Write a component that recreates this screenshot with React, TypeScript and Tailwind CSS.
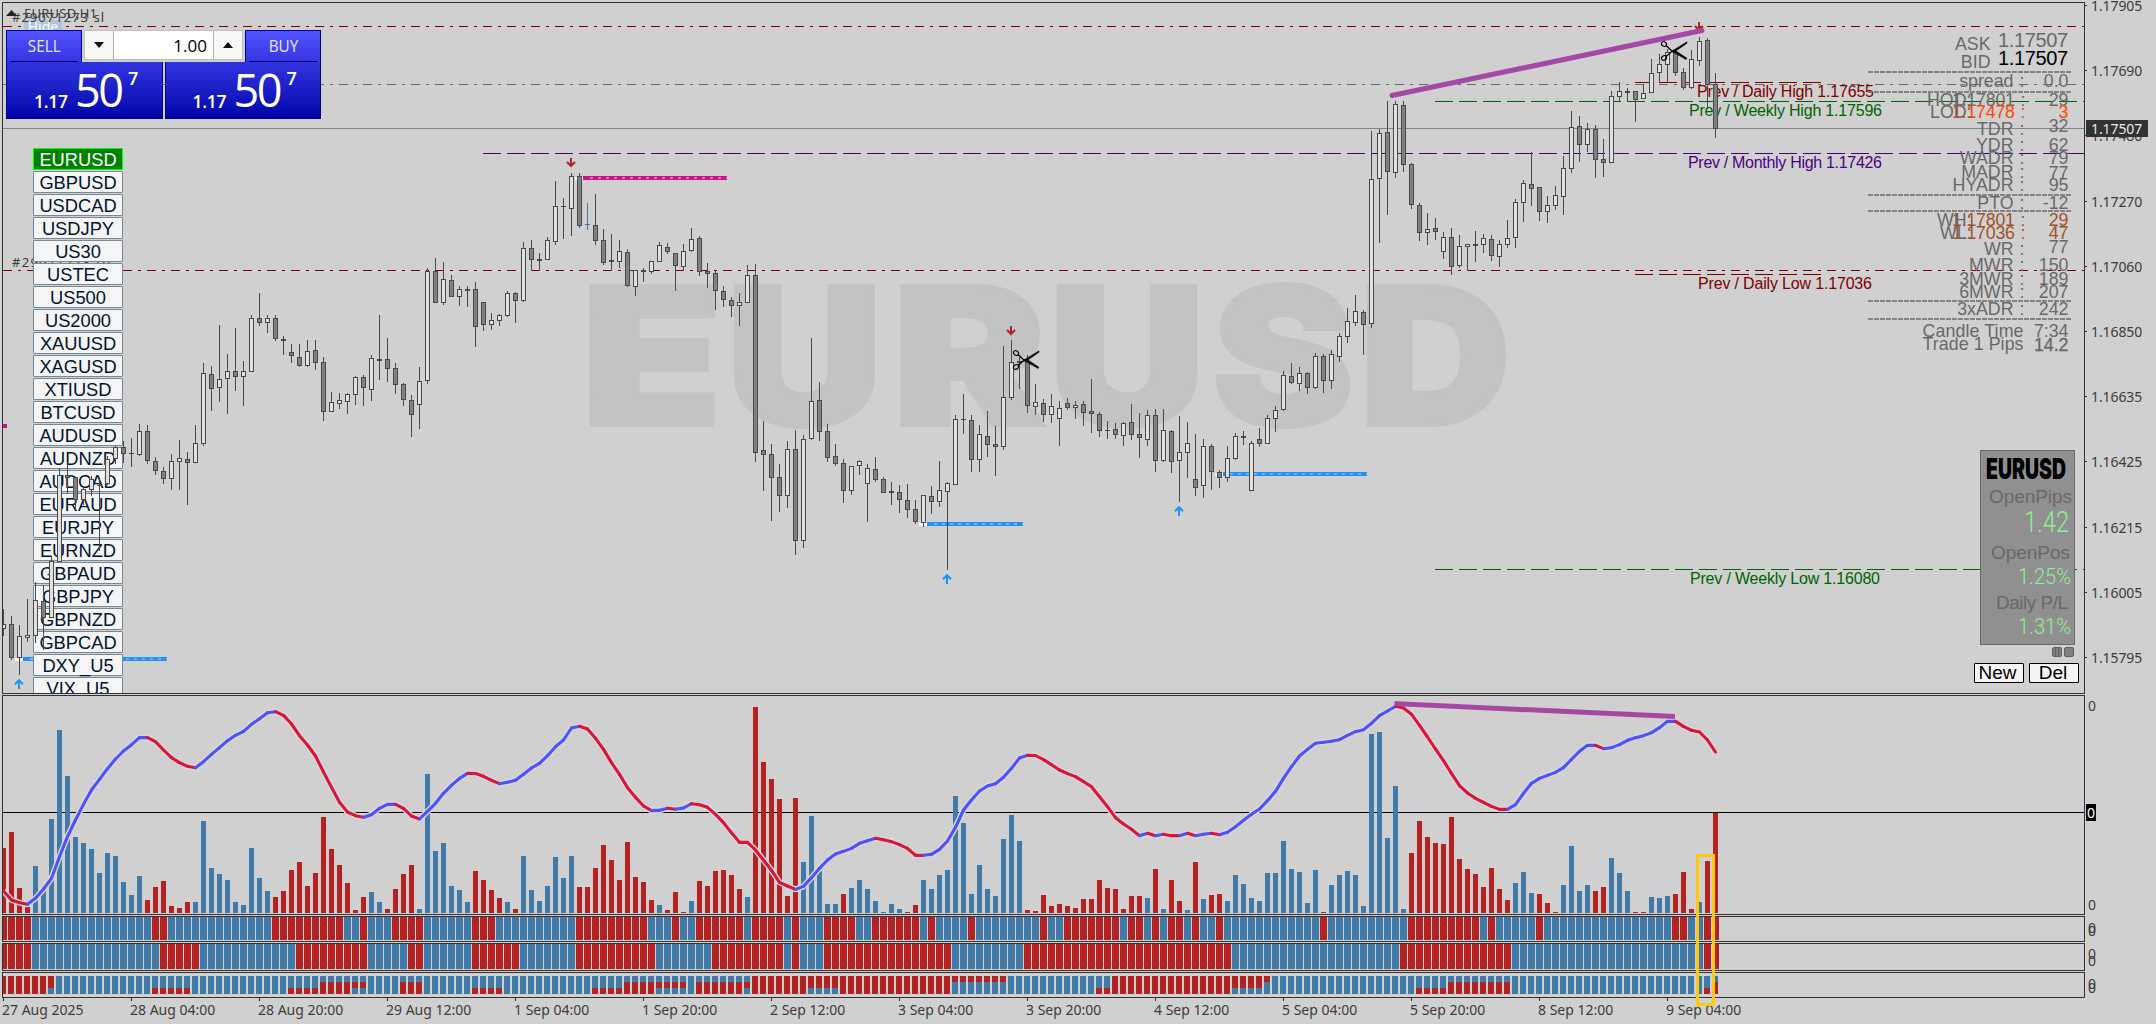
import { Fragment } from 'react';

type Candle = [number, number, number, number, string];

// high, body top, body bottom, low, kind (w = up, f = down, d = doji, b = marked doji)
const candles: Candle[] = [
    [609, 624, 629, 636, 'w'], [616, 624, 658, 660, 'f'], [625, 636, 658, 675, 'w'], [599, 635, 638, 642, 'w'], [582, 600, 636, 643, 'w'],
    [585, 601, 618, 650, 'f'], [556, 561, 618, 618, 'w'], [468, 475, 562, 562, 'w'], [462, 475, 478, 494, 'f'], [477, 477, 500, 510, 'f'],
    [486, 489, 500, 505, 'w'], [476, 479, 490, 496, 'w'], [478, 485, 486, 551, 'd'], [456, 459, 484, 485, 'w'], [446, 447, 459, 464, 'w'],
    [441, 447, 454, 463, 'f'], [438, 453, 454, 467, 'd'], [424, 431, 455, 456, 'w'], [425, 431, 461, 464, 'f'], [457, 461, 471, 475, 'f'],
    [467, 471, 479, 484, 'f'], [454, 461, 479, 490, 'w'], [440, 458, 462, 490, 'w'], [452, 459, 463, 505, 'f'], [425, 443, 463, 463, 'w'],
    [363, 373, 444, 446, 'w'], [366, 374, 389, 411, 'f'], [325, 379, 388, 402, 'w'], [354, 371, 379, 414, 'w'], [328, 371, 377, 391, 'f'],
    [361, 371, 377, 406, 'w'], [315, 318, 372, 372, 'w'], [293, 318, 323, 326, 'f'], [315, 318, 323, 333, 'w'], [315, 318, 339, 341, 'f'],
    [336, 339, 341, 355, 'f'], [344, 352, 356, 363, 'f'], [344, 357, 366, 367, 'f'], [340, 351, 366, 367, 'w'], [340, 350, 363, 370, 'f'],
    [357, 362, 412, 421, 'f'], [392, 402, 412, 412, 'w'], [393, 400, 404, 409, 'w'], [393, 394, 402, 414, 'w'], [376, 377, 395, 405, 'w'],
    [375, 377, 388, 406, 'f'], [355, 358, 390, 401, 'w'], [315, 359, 361, 380, 'f'], [338, 359, 369, 382, 'f'], [363, 368, 385, 394, 'f'],
    [383, 384, 400, 406, 'f'], [395, 400, 415, 437, 'f'], [367, 381, 405, 429, 'w'], [268, 271, 381, 384, 'w'], [258, 271, 303, 303, 'f'],
    [262, 279, 303, 305, 'w'], [275, 280, 297, 297, 'f'], [286, 289, 297, 306, 'w'], [286, 289, 291, 307, 'f'], [282, 289, 327, 347, 'f'],
    [302, 302, 325, 331, 'f'], [313, 320, 325, 330, 'w'], [314, 315, 321, 326, 'w'], [291, 293, 316, 317, 'w'], [292, 293, 301, 323, 'f'],
    [242, 248, 301, 302, 'w'], [240, 248, 260, 271, 'f'], [253, 259, 261, 271, 'f'], [237, 240, 260, 260, 'w'], [181, 206, 242, 245, 'w'],
    [198, 206, 207, 239, 'd'], [173, 176, 209, 236, 'w'], [173, 176, 226, 228, 'f'], [203, 224, 225, 230, 'b'], [194, 225, 241, 245, 'f'],
    [229, 240, 263, 265, 'f'], [234, 260, 262, 271, 'f'], [240, 251, 262, 268, 'w'], [249, 252, 286, 287, 'f'], [270, 270, 287, 296, 'w'],
    [268, 270, 272, 282, 'f'], [261, 261, 272, 274, 'w'], [242, 245, 262, 262, 'w'], [243, 247, 252, 254, 'f'], [253, 253, 266, 291, 'f'],
    [244, 251, 267, 271, 'w'], [228, 239, 251, 252, 'w'], [236, 238, 272, 276, 'f'], [263, 271, 274, 288, 'f'], [271, 273, 291, 310, 'f'],
    [286, 291, 300, 307, 'f'], [297, 300, 306, 317, 'f'], [293, 302, 306, 326, 'w'], [265, 275, 303, 303, 'w'], [264, 275, 453, 462, 'f'],
    [421, 450, 455, 491, 'f'], [444, 454, 478, 521, 'f'], [464, 477, 496, 512, 'f'], [441, 449, 496, 508, 'w'], [430, 449, 541, 555, 'f'],
    [435, 439, 541, 548, 'w'], [338, 401, 439, 440, 'w'], [382, 400, 432, 441, 'f'], [424, 431, 458, 462, 'f'], [444, 456, 464, 466, 'f'],
    [459, 463, 491, 503, 'f'], [466, 466, 491, 495, 'w'], [460, 461, 466, 475, 'w'], [464, 468, 484, 522, 'w'], [457, 469, 480, 482, 'f'],
    [477, 479, 493, 493, 'f'], [482, 491, 493, 505, 'f'], [485, 492, 500, 513, 'f'], [484, 500, 510, 518, 'f'], [500, 509, 522, 524, 'f'],
    [495, 495, 523, 527, 'w'], [486, 496, 502, 514, 'f'], [461, 490, 502, 507, 'w'], [482, 483, 492, 570, 'w'], [415, 419, 485, 485, 'w'],
    [394, 419, 420, 434, 'd'], [415, 420, 460, 472, 'f'], [425, 434, 460, 472, 'w'], [411, 436, 445, 457, 'f'], [426, 444, 447, 476, 'f'],
    [346, 397, 447, 450, 'w'], [340, 362, 398, 400, 'w'], [357, 361, 363, 389, 'f'], [355, 361, 406, 413, 'f'], [384, 402, 407, 415, 'w'],
    [399, 403, 415, 422, 'f'], [394, 406, 415, 423, 'w'], [401, 408, 419, 446, 'w'], [398, 403, 408, 410, 'f'], [401, 405, 408, 419, 'w'],
    [401, 404, 413, 426, 'f'], [379, 411, 414, 433, 'f'], [412, 414, 431, 437, 'f'], [421, 430, 431, 439, 'd'], [423, 429, 435, 439, 'f'],
    [422, 423, 436, 446, 'w'], [404, 422, 435, 440, 'f'], [413, 434, 438, 458, 'f'], [410, 415, 440, 446, 'w'], [409, 415, 461, 472, 'f'],
    [409, 430, 461, 462, 'w'], [430, 431, 462, 473, 'f'], [416, 452, 461, 502, 'w'], [422, 443, 453, 478, 'w'], [434, 479, 488, 496, 'f'],
    [439, 446, 486, 498, 'w'], [444, 446, 472, 490, 'f'], [470, 472, 478, 488, 'f'], [446, 458, 478, 482, 'w'], [433, 436, 459, 460, 'w'],
    [431, 436, 438, 445, 'f'], [441, 443, 491, 491, 'w'], [428, 439, 444, 447, 'f'], [415, 418, 444, 444, 'w'], [406, 410, 419, 432, 'w'],
    [371, 375, 410, 411, 'w'], [363, 376, 383, 384, 'f'], [367, 373, 384, 391, 'w'], [372, 373, 388, 394, 'f'], [353, 356, 388, 389, 'w'],
    [354, 356, 381, 393, 'f'], [350, 354, 381, 389, 'w'], [333, 336, 357, 362, 'w'], [308, 321, 337, 343, 'w'], [295, 311, 323, 326, 'w'],
    [310, 312, 325, 355, 'f'], [131, 179, 324, 328, 'w'], [129, 133, 179, 243, 'w'], [101, 132, 172, 215, 'f'], [101, 104, 173, 178, 'w'],
    [101, 105, 165, 172, 'f'], [163, 164, 205, 209, 'f'], [203, 205, 233, 241, 'f'], [213, 229, 233, 245, 'w'], [218, 228, 232, 240, 'f'],
    [232, 237, 252, 259, 'w'], [228, 237, 267, 275, 'f'], [235, 246, 266, 268, 'w'], [244, 244, 247, 271, 'w'], [231, 244, 246, 262, 'f'],
    [234, 238, 245, 253, 'w'], [235, 239, 256, 261, 'f'], [240, 244, 257, 267, 'w'], [220, 238, 245, 248, 'w'], [199, 202, 238, 248, 'w'],
    [180, 183, 203, 222, 'w'], [152, 184, 189, 206, 'f'], [187, 187, 212, 221, 'f'], [196, 205, 212, 223, 'w'], [186, 195, 206, 210, 'w'],
    [156, 168, 197, 215, 'w'], [111, 127, 169, 173, 'w'], [116, 126, 145, 162, 'f'], [123, 129, 145, 152, 'w'], [125, 129, 160, 178, 'f'],
    [139, 159, 163, 177, 'f'], [91, 96, 163, 163, 'w'], [82, 91, 97, 101, 'w'], [88, 91, 93, 101, 'f'], [91, 91, 100, 122, 'f'],
    [84, 93, 99, 99, 'w'], [59, 73, 93, 93, 'w'], [54, 64, 73, 82, 'w'], [49, 52, 65, 82, 'w'], [50, 52, 73, 76, 'f'],
    [68, 72, 88, 90, 'f'], [50, 59, 88, 89, 'w'], [37, 41, 61, 66, 'w'], [38, 40, 85, 108, 'f'], [73, 84, 129, 138, 'f'],
];

// negative = bearish volume
const volumes = [
    -65, -81, -25, -6, 47, 22, 94, 183, 137, 76, 70, 64, 40, 60, 57, 31, 18, 37, -13, -26,
    -32, -7, -5, -11, 11, 92, 45, 39, 33, 11, 8, 65, 35, 22, -16, -22, -43, -51, -27, -40,
    -96, -64, -48, -30, -3, -16, 21, 11, -4, -24, -39, -48, 4, 139, 62, 70, 27, 23, 11, -42,
    -33, -23, -15, 11, -4, 57, 23, 12, 27, 56, 35, 57, -26, -26, -45, -68, -53, -33, -71, -36,
    -31, -13, 8, -3, -21, -1, 12, -32, -27, -42, -43, -38, -24, 16, -206, -151, -134, -114, -17, -115,
    51, 97, 42, 9, 9, -19, 25, 33, 24, 12, 1, 9, 4, -1, -8, 33, 24, 38, 43, 117,
    90, 19, 48, 24, 17, 74, 98, 72, -3, -2, -18, -7, -9, -7, -5, -14, -14, -33, -25, -24,
    -4, -17, -17, 15, -44, 4, -33, -12, 3, -51, 14, -18, -19, 12, 38, 29, 15, 12, 40, 40,
    72, 44, 41, 10, 43, -1, 28, 38, 42, 38, 7, 179, 181, 75, 127, 4, -60, -92, -76, -70,
    -69, -96, -54, -44, -39, -26, -45, -24, -13, 30, 41, 20, -19, -10, -1, 28, 67, 22, 28, -22,
    -26, 55, 40, 22, -1, -1, 16, 15, 17, -19, -41, -4, 11, -52, -100,
];

const average = [
    603, 630, 638, 643, 625, 597, 565, 500, 440, 390, 343, 300, 268, 236, 207, 183, 164, 143, 143, 155,
    180, 203, 218, 229, 233, 215, 193, 173, 152, 136, 124, 103, 86, 68, 65, 76, 102, 137, 165, 198,
    246, 292, 337, 366, 377, 382, 374, 355, 343, 343, 355, 378, 387, 364, 340, 310, 286, 265, 250, 250.5,
    259, 271, 281, 277, 271, 253, 234, 220, 197, 170, 150, 114, 109, 117, 145, 178, 218, 253, 293, 322,
    348, 362, 361, 355, 358, 354, 341, 344, 352, 373, 398, 428, 457, 457, 480, 510, 541, 577, 588, 598,
    589, 563, 535, 510, 492, 484, 475, 460, 452, 445, 449, 455, 464, 475, 496, 496, 493, 478, 453, 412,
    360, 330, 303, 288, 281, 262, 235, 204, 196, 196.5, 209, 224, 240, 251, 260, 275, 290, 320, 350, 383,
    402, 418, 437, 430, 437, 433, 437, 437, 430, 437, 433, 430, 434, 427, 410, 391, 373, 357, 332, 304,
    265, 230, 198, 178, 160, 157, 154, 149, 136, 125, 119, 100, 77, 63, 49, 54, 73, 106, 141, 177,
    212, 250, 287, 309, 325, 337, 349, 358, 358, 344, 310, 280, 265, 256, 247, 233, 208, 184, 166, 166,
    176, 173, 164, 151, 143, 137, 128, 113, 94, 94, 109, 121, 126, 150, 186,
];

const trendFast = 'r4 b15 r2 b13 r9 b2 r1 b3 r4 b6 r3 b10 r9 b3 r1 b2 r6 b1 r4 b1 r1 b3 r4 b2 r6 b1 r1 b4 r1 b8 r1 b2 r7 b1 r2 b1 r1 b1 r2 b1 r1 b2 r1 b12 r1 b10 r9 b1 r1 b5 r1 b16 r2 b2 r2';
const trendSlow = 'r4 b16 r5 b12 r9 b5 r2 b6 r6 b7 r10 b7 r9 b1 r1 b3 r16 b9 r26 b21 r14 b24 r2';
const trendMulti = 'rrr6 rrb1 bbb12 bbr5 bbb12 bbr4 brr4 brb2 bbb4 brr3 bbb6 bbr4 bbb11 bbr4 brr4 brb4 bbb1 brr6 brb1 rrr7 rrb4 rrr14 rbb7 bbb11 bbr2 rrr15 rrb4 rbb1 bbb18 bbr4 brr8 bbb24 bbr1 brr1';

const symbols = [
    'EURUSD', 'GBPUSD', 'USDCAD', 'USDJPY', 'US30', 'USTEC', 'US500', 'US2000', 'XAUUSD', 'XAGUSD', 'XTIUSD', 'BTCUSD',
    'AUDUSD', 'AUDNZD', 'AUDCAD', 'EURAUD', 'EURJPY', 'EURNZD', 'GBPAUD', 'GBPJPY', 'GBPNZD', 'GBPCAD', 'DXY_U5', 'VIX_U5',
];

const prices = ['1.17905', '1.17690', '1.17480', '1.17270', '1.17060', '1.16850', '1.16635', '1.16425', '1.16215', '1.16005', '1.15795'];

const dates = [
    '27 Aug 2025', '28 Aug 04:00', '28 Aug 20:00', '29 Aug 12:00', '1 Sep 04:00', '1 Sep 20:00', '2 Sep 12:00',
    '3 Sep 04:00', '3 Sep 20:00', '4 Sep 12:00', '5 Sep 04:00', '5 Sep 20:00', '8 Sep 12:00', '9 Sep 04:00',
];

// label, label baseline, value, value baseline
const stats: [string, number, string, number][] = [
    ['spread', 86.5, '0.0', 86.5],
    ['TDR', 134.5, '32', 131.5],
    ['YDR', 151, '62', 151],
    ['WADR', 163.5, '79', 163.5],
    ['MADR', 178, '77', 178.5],
    ['HYADR', 190.5, '95', 190.5],
    ['PTO', 209, '-12', 209],
    ['WR', 255, '77', 252.5],
    ['MWR', 271, '150', 271],
    ['3MWR', 285, '189', 285],
    ['6MWR', 297.5, '207', 297.5],
    ['3xADR', 314.5, '242', 314.5],
];

const extremes: [string, number, string, string, string, number][] = [
    ['HOD:', 1927, '1.17801', '29', '#696969', 105.5],
    ['LOD:', 1930, '1.17478', '3', '#ff4500', 117.5],
    ['WH:', 1937, '1.17801', '29', '#a0522d', 225.5],
    ['WL:', 1940, '1.17036', '47', '#a0522d', 238.5],
];

const levelLabels: [string, number, number, number, string][] = [
    ['Prev / Daily High 1.17655', 1697, 96.5, 177, '#800000'],
    ['Prev / Weekly High 1.17596', 1689, 115.5, 193, '#006400'],
    ['Prev / Monthly High 1.17426', 1688, 167.5, 194, '#4b0082'],
    ['Prev / Daily Low 1.17036', 1698, 288.5, 174, '#800000'],
    ['Prev / Weekly Low 1.16080', 1690, 584, 190, '#006400'],
];

// letter, left edge, advance
const watermark: [string, number, number][] = [
    ['E', 581, 141],
    ['U', 726, 157],
    ['R', 892, 154],
    ['U', 1049, 156],
    ['S', 1212, 142],
    ['D', 1359, 152],
];

const colors: Record<string, string> = { r: '#b22222', b: '#4279a7' };

const expand = (runs: string) =>
    runs.split(' ').flatMap((run) => {
        const [, code, count] = run.match(/([rb]+)(\d+)/)!;
        return Array(Number(count)).fill(code) as string[];
    });

const barX = (i: number) => 3 + 8 * i;

function CandleBar({ index, candle }: { index: number; candle: Candle }) {
    const [high, top, bottom, low, kind] = candle;
    const x = barX(index);
    const stroke = kind === 'b' ? '#4279a7' : '#4a4a4a';
    return (
        <g>
            <rect x={x} y={high} width={1} height={Math.max(low - high, 1)} fill={stroke} />
            <rect x={x - 2} y={top} width={5} height={bottom - top} fill={stroke} />
            {bottom - top > 2 && (
                <rect x={x - 1} y={top + 1} width={3} height={bottom - top - 2} fill={kind === 'w' ? '#e0e0e0' : '#808080'} />
            )}
        </g>
    );
}

function Zone({ x1, x2, y, color, dot }: { x1: number; x2: number; y: number; color: string; dot: string }) {
    return (
        <g>
            <rect x={x1 - 8} y={y - 1} width={8} height={3} fill="#f4f4f4" />
            <line x1={x1} x2={x2} y1={y} y2={y} stroke={color} strokeWidth={4} />
            <line x1={x1 + 7} x2={x2} y1={y} y2={y} stroke={dot} strokeWidth={2} strokeDasharray="3 5" />
        </g>
    );
}

function Arrow({ x, y, up }: { x: number; y: number; up?: boolean }) {
    return (
        <path
            d={up ? 'M0 10V1M-4 5.2L0 1.2L4 5.2' : 'M0 0V8M-4 4L0 8L4 4'}
            transform={`translate(${x} ${y})`}
            fill="none"
            stroke={up ? '#1e90ff' : '#b22222'}
            strokeWidth={2}
        />
    );
}

function Scissors({ x, y }: { x: number; y: number }) {
    return (
        <g transform={`translate(${x} ${y})`} fill="none" stroke="#000">
            <ellipse cx={3} cy={3} rx={2.6} ry={2.2} transform="rotate(35 3 3)" strokeWidth={1.1} />
            <ellipse cx={3} cy={17} rx={2.6} ry={2.2} transform="rotate(-35 3 17)" strokeWidth={1.1} />
            <path d="M5 4.5L12 11M5 15.5L12 9.5" strokeWidth={1.3} />
            <path d="M11 10L26 0.8L26 2.3L13 11.2ZM11 10.5L14 9.3L26 17.2L25 18.6Z" fill="#000" strokeWidth={0.5} />
        </g>
    );
}

function PriceLevels() {
    return (
        <svg className="absolute inset-0" width={2081} height={690} viewBox="3 3 2081 690">
            <g shapeRendering="crispEdges" strokeWidth={1} fill="none">
                <path d="M3 26.5H2084M3 270.5H2084" stroke="#800000" strokeDasharray="9 6 3 6" />
                <path d="M3 84.5H2084" stroke="#696969" strokeDasharray="9 6 3 6" />
                <path d="M483 153.5H2084" stroke="#4b0082" strokeDasharray="18 6" />
                <path d="M1435 101.5H2084M1435 569.5H2084" stroke="#006400" strokeDasharray="18 6" />
                <path d="M1635 82.5H1821M1635 274.5H1821" stroke="#800000" strokeDasharray="18 6" />
                <path d="M3 128.5H2084" stroke="#778899" />
            </g>
            <g fill="#c3c3c3" stroke="#c3c3c3" strokeWidth={4} className="font-['Inter'] text-[191px] font-black">
                {watermark.map(([letter, x, width]) => (
                    <text key={x} x={x} y={425} textLength={width} lengthAdjust="spacingAndGlyphs">{letter}</text>
                ))}
            </g>
            <g shapeRendering="crispEdges">
                <Zone x1={583} x2={727} y={178} color="#c71585" dot="#d77bb4" />
                <rect x={3} y={424} width={4} height={4} fill="#c71585" />
                <Zone x1={23} x2={167} y={659} color="#1e90ff" dot="#8fa8dc" />
                <Zone x1={927} x2={1023} y={524} color="#1e90ff" dot="#8fa8dc" />
                <Zone x1={1223} x2={1367} y={474} color="#1e90ff" dot="#8fa8dc" />
            </g>
            <g className="font-['Liberation_Sans'] text-[16px]">
                {levelLabels.map(([label, x, y, width, color]) => (
                    <text key={label} x={x} y={y} fill={color} textLength={width}>{label}</text>
                ))}
            </g>
            <text x={12} y={267} textLength={98} fill="#3c3c3c" className="font-['Noto_Sans'] text-[13px]">#29071273 tp</text>
        </svg>
    );
}

function SymbolList() {
    return (
        <div className="absolute left-[30px] top-[145px] flex w-[90px] flex-col gap-px">
            {symbols.map((symbol, i) => (
                <button
                    key={symbol}
                    className={
                        i === 0
                            ? "h-[22px] shrink-0 border border-[#00ff00] bg-[#008000] font-['Liberation_Sans'] text-[18.3px] leading-[21px] text-white"
                            : "h-[22px] shrink-0 rounded-[1px] border border-[#778899] bg-[#f5f5f5] font-['Liberation_Sans'] text-[18.3px] leading-[21px] text-[#001433]"
                    }
                >
                    {symbol}
                </button>
            ))}
        </div>
    );
}

function PriceCandles() {
    return (
        <svg className="absolute inset-0" width={2081} height={690} viewBox="3 3 2081 690">
            <g shapeRendering="crispEdges">
                {candles.map((candle, i) => <CandleBar key={i} index={i} candle={candle} />)}
            </g>
            <g className="font-['Noto_Sans'] text-[13px]" fill="#3c3c3c">
                <text x={12} y={22} textLength={92}>#29071273 sl</text>
                <text x={24} y={18} textLength={73}>EURUSD,H1</text>
                <path d="M6 16L11.5 10L17 16Z" fill="#222" />
            </g>
            <Arrow x={571} y={158} />
            <Arrow x={1011} y={326} />
            <Arrow x={1699} y={22} />
            <Arrow x={19} y={679} up />
            <Arrow x={947} y={574} up />
            <Arrow x={1179} y={506} up />
            <Scissors x={1013} y={350} />
            <Scissors x={1661} y={41} />
            <line x1={1392} y1={95.5} x2={1702} y2={30.5} stroke="#a349a4" strokeWidth={5} strokeLinecap="round" />
            <g className="font-['Liberation_Sans'] text-[17.8px]" fill="#696969">
                <text x={1990.5} y={50} textAnchor="end">ASK</text>
                <text x={1990.5} y={68} textAnchor="end">BID</text>
                <text x={1998} y={46.5} textLength={70} className="text-[20px]">1.17507</text>
                <text x={1998} y={64.5} textLength={70} className="text-[20px]" fill="#000">1.17507</text>
                {stats.map(([label, y, value, valueY]) => (
                    <Fragment key={label}>
                        <text x={2013.5} y={y} textAnchor="end">{label}</text>
                        <text x={2019.5} y={y}>:</text>
                        <text x={2068.5} y={valueY} textAnchor="end">{value}</text>
                    </Fragment>
                ))}
                {extremes.map(([label, x, price, value, color, y]) => (
                    <Fragment key={label}>
                        <g fill={color}>
                            <text x={1952} y={y} textLength={63}>{price}</text>
                            <text x={2020.5} y={y}>:</text>
                            <text x={2068.5} y={y} textAnchor="end">{value}</text>
                        </g>
                        <text x={x} y={y}>{label}</text>
                    </Fragment>
                ))}
                <text x={1922.5} y={336.5} textLength={101}>Candle Time</text>
                <text x={1922.5} y={350} textLength={101}>Trade 1 Pips</text>
                <text x={2068.5} y={336.5} textAnchor="end">7:34</text>
                <text x={2068.5} y={351} textAnchor="end" stroke="#696969" strokeWidth={0.3}>14.2</text>
            </g>
            <path
                d="M1868 72H2071M1868 92H2071M1868 195H2071M1868 211H2071M1868 301H2071M1868 319H2071"
                stroke="#696969"
                strokeWidth={1.7}
                strokeDasharray="5 1"
            />
        </svg>
    );
}

function PriceBlock() {
    return (
        <div className="flex h-[57px] flex-1 items-end border-x border-b border-[#0000a0] bg-linear-to-b from-[#3232e0] to-[#0000aa] pl-[27px] font-['Open_Sans'] text-white">
            <span className="mb-[5px] w-[35px] text-[17.5px] font-semibold leading-[24px] tracking-[-0.3px]">1.17</span>
            <span className="mb-[4px] ml-[6px] w-[48px] text-[45px] leading-[48px] tracking-[-2.4px]">50</span>
            <span className="mb-[29px] ml-[5px] text-[18px] font-semibold leading-[22px]">7</span>
        </div>
    );
}

function OneClickPanel() {
    return (
        <div className="absolute left-[3px] top-[27px] flex w-[315px] flex-col">
            <div className="flex h-[32px] justify-between">
                <div className="w-[76px] border-x border-t border-[#0000a0] bg-linear-to-b from-[#5252ff] to-[#3535e2] px-[3px] text-center font-['Open_Sans'] text-[17px] leading-[30px] text-[#e6e6ff]">
                    <div className="h-[31px] border-b border-[#000080]"><span className="inline-block scale-x-90">SELL</span></div>
                </div>
                <div className="flex h-[30px] w-[159px] items-center border border-[#c0c0c0] bg-[#f7f7f7]">
                    <div className="flex flex-1 justify-center">
                        <svg width={10} height={6}><path d="M0 0H10L5 6Z" fill="#111" /></svg>
                    </div>
                    <div className="h-[28px] w-[101px] border-x border-[#b0b0b0] bg-white pr-[6px] text-right font-['Open_Sans'] text-[17px] leading-[29px] text-black">
                        1.00
                    </div>
                    <div className="flex flex-1 justify-center">
                        <svg width={10} height={6}><path d="M0 6H10L5 0Z" fill="#111" /></svg>
                    </div>
                </div>
                <div className="w-[76px] border-x border-t border-[#0000a0] bg-linear-to-b from-[#5252ff] to-[#3535e2] px-[3px] text-center font-['Open_Sans'] text-[17px] leading-[30px] text-[#e6e6ff]">
                    <div className="h-[31px] border-b border-[#000080]"><span className="inline-block scale-x-90">BUY</span></div>
                </div>
            </div>
            <div className="flex gap-[2px]">
                <PriceBlock />
                <PriceBlock />
            </div>
        </div>
    );
}

function PositionPanel() {
    return (
        <>
            <div className="absolute left-[1977px] top-[447px] h-[195px] w-[95px] border border-[#696969] bg-[#909090]">
                <svg width={93} height={193} viewBox="1981 451 93 193">
                    <text x={1986} y={479} textLength={80} lengthAdjust="spacingAndGlyphs" fill="#000" className="font-['Inter'] text-[28.5px] font-black">EURUSD</text>
                    <g className="font-['Liberation_Sans'] text-[19px]" fill="#696969">
                        <text x={1989} y={503} textLength={83}>OpenPips</text>
                        <text x={1991} y={559} textLength={79}>OpenPos</text>
                        <text x={1996} y={609} textLength={72}>Daily P/L</text>
                    </g>
                    <g className="font-['Roboto'] font-light" fill="#90ee90" textAnchor="end">
                        <text x={2069} y={532} className="text-[30px]" textLength={45} lengthAdjust="spacingAndGlyphs">1.42</text>
                        <text x={2071} y={584} className="text-[22px]" textLength={53} lengthAdjust="spacingAndGlyphs">1.25%</text>
                        <text x={2071} y={634} className="text-[22px]" textLength={53} lengthAdjust="spacingAndGlyphs">1.31%</text>
                    </g>
                </svg>
            </div>
            <div className="absolute left-[2049px] top-[644px] flex gap-[2px]">
                <div className="flex h-[10px] w-[10px] justify-center rounded-[2px] border border-[#606060] bg-[#808080]">
                    <div className="w-[4px] border-x border-[#606060]" />
                </div>
                <div className="h-[10px] w-[10px] rounded-[2px] border border-[#606060] bg-[#808080]" />
            </div>
            <div className="absolute left-[1971px] top-[660px] flex gap-[5px] font-['Liberation_Sans'] text-[19px] leading-[18px] text-black">
                <button className="h-[20px] w-[50px] rounded-[1px] border border-black bg-[#f5f5f5] pr-[3px]">New</button>
                <button className="h-[20px] w-[50px] rounded-[1px] border border-black bg-[#f5f5f5] pr-[2px]">Del</button>
            </div>
        </>
    );
}

function VolumePanel() {
    const points = average.map((v, i) => ({ x: barX(i) + 0.5, y: v / 3 + 690 }));
    const path = points.map((p) => `${p.x},${p.y}`).join(' ');
    let falling = true;
    return (
        <svg width={2081} height={218} viewBox="3 696 2081 218" className="block">
            <g shapeRendering="crispEdges">
                <rect x={3} y={812} width={2081} height={1} fill="#000" />
                {volumes.map((v, i) => (
                    <rect key={i} x={barX(i) - 2} y={913 - Math.abs(v)} width={5} height={Math.abs(v)} fill={v < 0 ? colors.r : colors.b} />
                ))}
            </g>
            <polyline points={path} fill="none" stroke="#d8d8d8" strokeWidth={6} strokeLinejoin="round" />
            <g strokeWidth={3.1} strokeLinecap="round">
                {points.slice(1).map((p, i) => {
                    const prev = points[i];
                    if (p.y !== prev.y) falling = p.y > prev.y;
                    return <line key={i} x1={prev.x} y1={prev.y} x2={p.x} y2={p.y} stroke={falling ? '#dc143c' : '#5050ff'} />;
                })}
            </g>
            <line x1={1397} y1={703.7} x2={1672.5} y2={716.5} stroke="#a349a4" strokeWidth={5} strokeLinecap="square" />
        </svg>
    );
}

function TrendRow({ runs, y, height }: { runs: string; y: number; height: number }) {
    return (
        <svg width={2081} height={height + 1} viewBox={`3 ${y} 2081 ${height + 1}`} className="block" shapeRendering="crispEdges">
            {expand(runs).map((code, i) => (
                <rect key={i} x={barX(i) - 3} y={y} width={7} height={height} fill={colors[code]} />
            ))}
        </svg>
    );
}

function MultiTrendRow() {
    return (
        <svg width={2081} height={24} viewBox="3 973 2081 24" className="block" shapeRendering="crispEdges">
            {expand(trendMulti).map((code, i) => (
                <g key={i}>
                    <rect x={barX(i) + 3} y={976} width={1} height={18} fill="#b9d3c4" />
                    {code.split('').map((c, k) => (
                        <rect key={k} x={barX(i) - 3} y={976 + k * 6} width={6} height={6} fill={colors[c]} />
                    ))}
                </g>
            ))}
        </svg>
    );
}

export default function App() {
    return (
        <div className="relative flex h-[1024px] w-[2156px] flex-col gap-px overflow-hidden bg-[#d0d0d0] pl-[2px] pt-[2px] font-['Noto_Sans',sans-serif] text-[14px] text-[#3c3c3c]">
            <div className="flex h-[692px] shrink-0">
                <div className="relative w-[2083px] overflow-hidden border border-[#333]">
                    <PriceLevels />
                    <SymbolList />
                    <div className="absolute left-[20px] top-[16px] h-[20px] w-[40px] border border-[#c4d4e6] bg-[#b0c4de] text-center text-[14px] leading-[14px] text-white">Hide</div>
                    <PriceCandles />
                    <OneClickPanel />
                    <PositionPanel />
                </div>
                <div className="relative w-[71px]">
                    <div className="-mt-[5px] flex flex-col">
                        {prices.map((price) => (
                            <div key={price} className="flex h-[65.2px] items-start">
                                <span className="mt-[8px] h-px w-[2px] bg-[#333]" />
                                <span className="ml-[4px] leading-[17px] tracking-[-0.1px]">{price}</span>
                            </div>
                        ))}
                    </div>
                    <div className="absolute left-[1px] top-[118px] h-[17px] w-[62px] bg-[#333] pl-[5px] leading-[17px] tracking-[-0.1px] text-[#e8e8e8]">1.17507</div>
                </div>
            </div>
            <div className="flex h-[220px] shrink-0">
                <div className="w-[2083px] border border-[#333]"><VolumePanel /></div>
                <div className="flex w-[71px] flex-col pt-[2px] leading-[18px]">
                    <span className="pl-[3px]">0</span>
                    <span className="ml-[1px] mt-[89px] h-[17px] w-[10px] bg-black text-center leading-[17px] text-white">0</span>
                    <span className="mt-[75px] pl-[3px]">0</span>
                </div>
            </div>
            <div className="flex h-[26px] shrink-0">
                <div className="w-[2083px] border border-[#333]"><TrendRow runs={trendFast} y={917} height={23} /></div>
                <div className="flex flex-col pl-[3px] pt-[3px] leading-[17px]"><span>0</span><span className="-mt-[14px]">0</span></div>
            </div>
            <div className="flex h-[28px] shrink-0">
                <div className="w-[2083px] border border-[#333]"><TrendRow runs={trendSlow} y={944} height={25} /></div>
                <div className="flex flex-col pl-[3px] pt-[2px] leading-[17px]"><span>0</span><span className="-mt-[10px]">0</span></div>
            </div>
            <div className="flex h-[26px] shrink-0">
                <div className="w-[2083px] border border-[#333]"><MultiTrendRow /></div>
                <div className="flex flex-col pl-[3px] pt-[3px] leading-[17px]"><span>0</span><span className="-mt-[13px]">0</span></div>
            </div>
            <div className="-mt-px flex">
                {dates.map((date) => (
                    <div key={date} className="flex w-[128px] shrink-0 flex-col whitespace-nowrap">
                        <span className="ml-px h-[3px] w-px bg-[#333]" />
                        <span className="leading-[17px]">{date}</span>
                    </div>
                ))}
            </div>
            <div className="absolute left-[1696px] top-[854px] h-[152px] w-[19px] border-[3px] border-[#ffc90e]" />
        </div>
    );
}
